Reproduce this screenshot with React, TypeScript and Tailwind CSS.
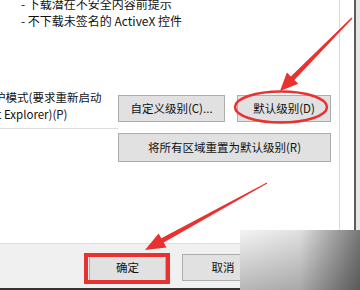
import React from 'react';

type BtnProps = {
  children: React.ReactNode;
  className?: string;
};

function Btn({ children, className = '' }: BtnProps) {
  return (
    <button
      type="button"
      className={`flex shrink-0 items-center justify-center border border-[#adadad] bg-[#e1e1e1] leading-none text-[#111] whitespace-nowrap ${className}`}
    >
      {children}
    </button>
  );
}

export default function App() {
  return (
    <div className="relative h-[290px] w-[360px] overflow-hidden bg-white font-['Noto_Sans_CJK_SC','Noto_Sans',sans-serif] text-[11.5px] text-[#111]">
      {/* white settings area */}
      <div className="flex h-[243px]">
        <div className="flex w-[339px] flex-col">
          <div className="-mt-[5px] pl-[21px] text-[12px] leading-[17px] whitespace-nowrap">
            <p>- 下载潜在不安全内容前提示</p>
            <p>- 不下载未签名的 ActiveX 控件</p>
          </div>

          <div className="mt-[60px] flex">
            <div className="w-[118px] shrink-0">
              <p className="-ml-[6px] leading-[17px] whitespace-nowrap">护模式(要求重新启动</p>
              <p className="-ml-[3px] leading-[17px] whitespace-nowrap">t Explorer)(P)</p>
              <div className="mt-[5px] h-px bg-[#dcdcdc]" />
            </div>
            <div className="mt-[6px] flex flex-col gap-[11px]">
              <div className="flex gap-[12px]">
                <Btn className="h-[27px] w-[107px]">自定义级别(C)...</Btn>
                <Btn className="h-[27px] w-[94px]">默认级别(D)</Btn>
              </div>
              <Btn className="h-[29px] w-[213px]">将所有区域重置为默认级别(R)</Btn>
            </div>
          </div>
        </div>
        <div className="w-[15px] border-l border-[#dadada] bg-white" />
        <div className="w-[2px] bg-[#5c5c5c]" />
        <div className="flex-1 bg-[#e6e6e6]" />
      </div>

      {/* dialog footer */}
      <div className="flex h-[45px] items-start gap-[16px] border-t border-[#dfdfdf] bg-[#f0f0f0] pl-[89px] pt-[10px]">
        <Btn className="h-[27px] w-[77px]">确定</Btn>
        <Btn className="h-[27px] w-[82px]">取消</Btn>
      </div>
      <div className="h-[2px] bg-[#333]" />

      {/* watermark box */}
      <div className="absolute left-[240px] top-[230px] h-[60px] w-[120px] bg-gradient-to-r from-[#f4f4f4] via-[#e0e0e0] to-[#777]">
        <div className="h-full w-full bg-gradient-to-b from-transparent to-black/25" />
      </div>

      {/* red annotations */}
      <svg className="pointer-events-none absolute left-0 top-0" width="360" height="290" viewBox="0 0 360 290">
        <polygon
          fill="#e8322f"
          points="351.5,17.5 290.8,76.4 286.9,72.6 280,91 298.3,83.8 294.4,80 352.5,18.5"
        />
        <ellipse cx="281" cy="107" rx="46" ry="15.5" fill="none" stroke="#e8322f" strokeWidth="2.5" />
        <polygon
          fill="#e8322f"
          points="266.8,182.6 161.3,238.2 158.6,233.4 145,250 166.4,247.4 163.7,242.6 267.2,183.4"
        />
        <rect x="86" y="255" width="82" height="27" fill="none" stroke="#e8322f" strokeWidth="4" />
      </svg>
    </div>
  );
}
